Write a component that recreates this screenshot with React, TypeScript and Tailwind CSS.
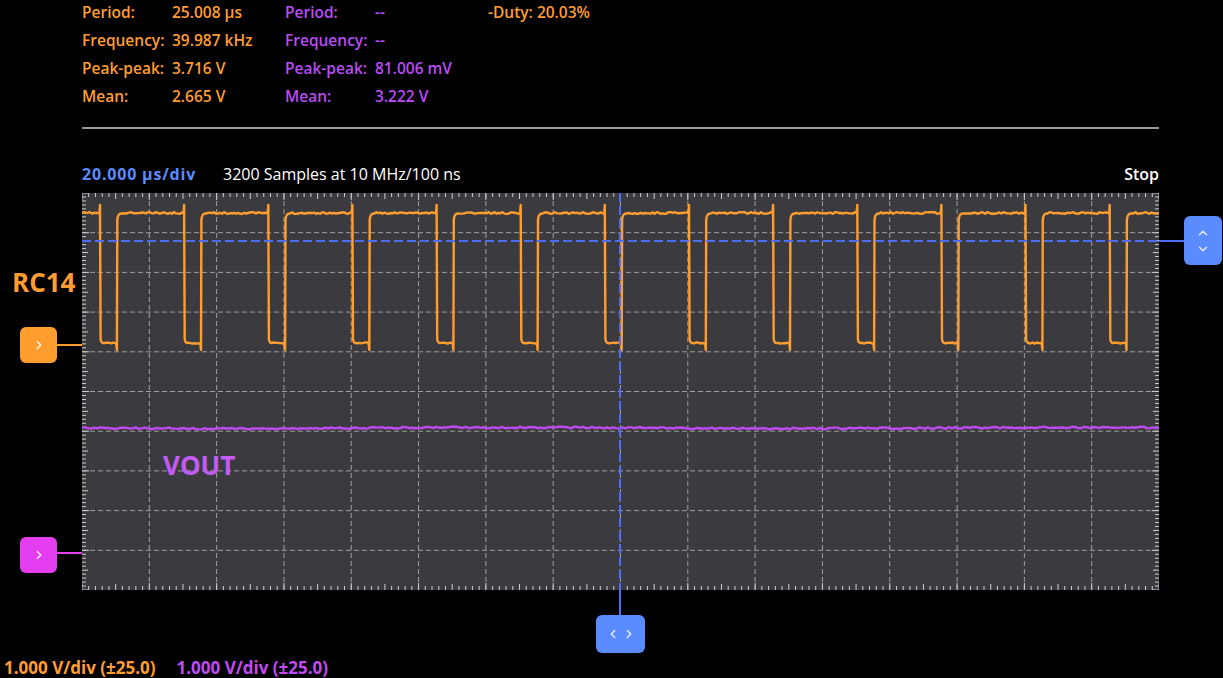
import { ChevronDown, ChevronLeft, ChevronRight, ChevronUp } from "lucide-react";

const W = 1077;
const H = 397;
const DX = W / 16;
const DY = H / 10;

const ORANGE = "#ff9d2e";
const PURPLE = "#c04af2";

function rng(seed: number) {
	let s = seed;
	return () => {
		s = (s * 16807) % 2147483647;
		return s / 2147483647;
	};
}

function orangePath() {
	const r = rng(11);
	const n = (a: number) => (r() - 0.5) * a;
	const P = DX * 1.25;
	const low = P * 0.2003;
	const HI = 20;
	const LO = 150;
	let d = `M0 ${HI}`;
	let x = 0;
	for (let k = 0; ; k++) {
		const xf = 18 + k * P;
		if (xf > W) break;
		for (let t = x + 2; t < xf - 1; t += 2) d += ` L${t.toFixed(1)} ${(HI + n(1.8)).toFixed(1)}`;
		d += ` L${(xf - 0.6).toFixed(1)} ${HI} L${xf.toFixed(1)} ${HI - 8} L${(xf + 0.6).toFixed(1)} ${LO - 4} Q${(xf + 1).toFixed(1)} ${LO} ${(xf + 3).toFixed(1)} ${LO}`;
		const xr = xf + low;
		for (let t = xf + 5; t < xr - 1; t += 2) d += ` L${t.toFixed(1)} ${(LO + n(1.2)).toFixed(1)}`;
		d += ` L${(xr - 0.6).toFixed(1)} ${LO + 1} L${xr.toFixed(1)} ${LO + 7} L${(xr + 0.4).toFixed(1)} ${HI + 7} Q${(xr + 0.9).toFixed(1)} ${HI} ${(xr + 5).toFixed(1)} ${HI + 0.5}`;
		x = xr + 5;
	}
	for (let t = x + 2; t < W; t += 2) d += ` L${t.toFixed(1)} ${(HI + n(1.8)).toFixed(1)}`;
	d += ` L${W} ${HI}`;
	return d;
}

function purplePath() {
	const r = rng(5);
	let d = "M0 235";
	for (let t = 3; t <= W; t += 3) {
		const y = 235 + Math.sin(t / 90) * 0.6 + (r() - 0.5) * 1.8;
		d += ` L${t} ${y.toFixed(1)}`;
	}
	return d;
}

function Ticks() {
	const items: JSX.Element[] = [];
	for (let i = 0; i <= 160; i++) {
		const x = i * (DX / 10);
		const len = i % 10 === 0 ? 7 : i % 5 === 0 ? 6 : 4;
		items.push(<line key={`t${i}`} x1={x} y1={0} x2={x} y2={len} />);
		items.push(<line key={`b${i}`} x1={x} y1={H} x2={x} y2={H - len} />);
	}
	for (let j = 0; j <= 100; j++) {
		const y = j * (DY / 10);
		const len = j % 10 === 0 ? 7 : j % 5 === 0 ? 6 : 4;
		items.push(<line key={`l${j}`} x1={0} y1={y} x2={len} y2={y} />);
		items.push(<line key={`r${j}`} x1={W} y1={y} x2={W - len} y2={y} />);
	}
	return (
		<g stroke="#cfcfcf" strokeWidth={1}>
			{items}
		</g>
	);
}

function Plot() {
	return (
		<svg width={W} height={H} viewBox={`0 0 ${W} ${H}`} className="shrink-0 block">
			<rect width={W} height={H} fill="#3b3b3f" />
			<g stroke="#a0a0a0" strokeWidth={1} strokeDasharray="5 3">
				{Array.from({ length: 15 }, (_, i) => (
					<line key={`v${i}`} x1={(i + 1) * DX} y1={0} x2={(i + 1) * DX} y2={H} />
				))}
				{Array.from({ length: 9 }, (_, i) => (
					<line key={`h${i}`} x1={0} y1={(i + 1) * DY} x2={W} y2={(i + 1) * DY} />
				))}
			</g>
			<Ticks />
			<path d={purplePath()} fill="none" stroke={PURPLE} strokeWidth={2.4} strokeLinejoin="round" />
			<path d={orangePath()} fill="none" stroke={ORANGE} strokeWidth={2.4} strokeLinejoin="round" />
			<line x1={0} y1={48} x2={W} y2={48} stroke="#4d6dff" strokeWidth={2} strokeDasharray="9 4" />
			<line x1={538} y1={0} x2={538} y2={H} stroke="#4d6dff" strokeWidth={2} strokeDasharray="9 4" />
		</svg>
	);
}

const rows = [
	["Period:", "25.008 µs", "Period:", "--", "-Duty: 20.03%"],
	["Frequency:", "39.987 kHz", "Frequency:", "--", ""],
	["Peak-peak:", "3.716 V", "Peak-peak:", "81.006 mV", ""],
	["Mean:", "2.665 V", "Mean:", "3.222 V", ""],
];

export default function App() {
	return (
		<div
			className="w-[1223px] h-[678px] bg-black overflow-hidden"
			style={{ fontFamily: '"Open Sans", "Liberation Sans", sans-serif' }}
		>
			<div className="pl-[82px] grid grid-cols-[90px_113px_90px_113px_auto] gap-y-[4px] text-[15.5px] leading-[24px] font-semibold">
				{rows.map((r, i) => (
					<div key={i} className="contents">
						<span className="text-[#ff9d33]">{r[0]}</span>
						<span className="text-[#ff9d33]">{r[1]}</span>
						<span className="text-[#b94cf5]">{r[2]}</span>
						<span className="text-[#b94cf5]">{r[3]}</span>
						<span className="text-[#ff9d33]">{r[4]}</span>
					</div>
				))}
			</div>

			<div className="ml-[82px] mt-[19px] w-[1077px] h-[2px] bg-[#9a9a9a]" />

			<div className="ml-[82px] mt-[35px] w-[1077px] flex items-center text-[16px] leading-[20px]">
				<span className="font-bold tracking-[0.8px] text-[#5b8cff] w-[141px]">20.000 µs/div</span>
				<span className="text-white">3200 Samples at 10 MHz/100 ns</span>
				<span className="ml-auto font-semibold text-white">Stop</span>
			</div>

			<div className="relative mt-[9px] flex h-[397px]">
				<div className="w-[82px] shrink-0" />
				<Plot />

				<span className="absolute left-[12px] top-[72px] text-[26px] leading-[34px] font-bold text-[#ff9d33]">
					RC14
				</span>
				<span className="absolute left-[163px] top-[255px] text-[26px] leading-[34px] font-bold text-[#c35cf5]">
					VOUT
				</span>

				<div className="absolute left-[20px] top-[134px] w-[37px] h-[36px] rounded-[6px] bg-[#ff9d2e] flex items-center justify-center text-white/90">
					<ChevronRight size={14} strokeWidth={2.5} />
				</div>
				<div className="absolute left-[57px] top-[151px] w-[25px] h-[2px] bg-[#ff9d2e]" />

				<div className="absolute left-[20px] top-[344px] w-[37px] h-[36px] rounded-[6px] bg-[#e43ef0] flex items-center justify-center text-white/90">
					<ChevronRight size={14} strokeWidth={2.5} />
				</div>
				<div className="absolute left-[57px] top-[359px] w-[25px] h-[2px] bg-[#e43ef0]" />

				<div className="absolute left-[1159px] top-[47px] w-[25px] h-[2px] bg-[#4d6dff]" />
				<div className="absolute left-[1184px] top-[23px] w-[38px] h-[49px] rounded-[6px] bg-[#5b8cff] flex flex-col items-center justify-center text-white/85 gap-[2px]">
					<ChevronUp size={14} strokeWidth={2.5} />
					<ChevronDown size={14} strokeWidth={2.5} />
				</div>

				<div className="absolute left-[619px] top-[397px] w-[2px] h-[25px] bg-[#4d6dff]" />
				<div className="absolute left-[596px] top-[422px] w-[49px] h-[38px] rounded-[6px] bg-[#5b8cff] flex items-center justify-center text-white/85 gap-[2px]">
					<ChevronLeft size={14} strokeWidth={2.5} />
					<ChevronRight size={14} strokeWidth={2.5} />
				</div>
			</div>

			<div className="mt-[68px] pl-[4px] flex gap-[21px] text-[17px] leading-[20px] font-bold">
				<span className="text-[#ff9d33]">1.000 V/div (±25.0)</span>
				<span className="text-[#c04af2]">1.000 V/div (±25.0)</span>
			</div>
		</div>
	);
}
